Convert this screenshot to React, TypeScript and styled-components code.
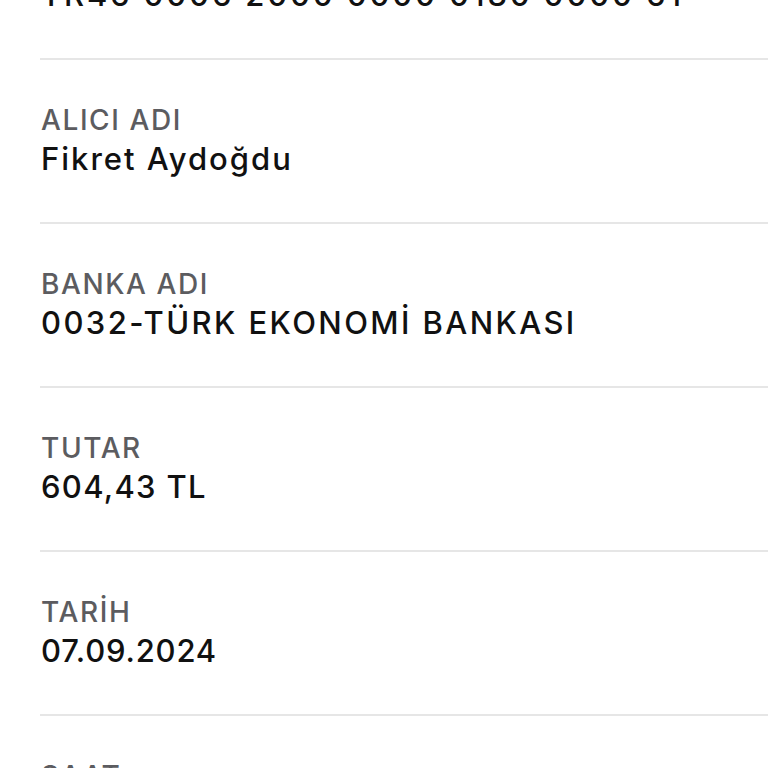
import styled, { createGlobalStyle } from 'styled-components'

const GlobalStyle = createGlobalStyle`
  html, body {
    margin: 0;
    padding: 0;
    background: #ffffff;
  }
  body {
    font-family: Inter, "Noto Sans", "Liberation Sans", sans-serif;
  }
`

const Viewport = styled.div`
  width: 768px;
  height: 768px;
  overflow: hidden;
  background: #ffffff;
`

const List = styled.div`
  display: flex;
  flex-direction: column;
  margin-top: -104px;
`

const Row = styled.div`
  display: flex;
  flex-direction: column;
  margin-left: 40px;
  padding: 41px 0 43px 1px;
  border-bottom: 2px solid #e6e6e6;
`

const Label = styled.div`
  font-size: 28px;
  line-height: 38px;
  font-weight: 500;
  color: #5c5c60;
  letter-spacing: 1.6px;
`

const Value = styled.div<{ $tracking?: number }>`
  font-size: 31px;
  line-height: 40px;
  font-weight: 500;
  color: #111111;
  letter-spacing: ${({ $tracking }) => $tracking ?? 2}px;
`

const items = [
  { label: 'IBAN', value: 'TR46 0006 2000 0000 0130 0000 61', tracking: 2.8 },
  { label: 'ALICI ADI', value: 'Fikret Aydoğdu' },
  { label: 'BANKA ADI', value: '0032-TÜRK EKONOMİ BANKASI', tracking: 2.4 },
  { label: 'TUTAR', value: '604,43 TL', tracking: 1.3 },
  { label: 'TARİH', value: '07.09.2024', tracking: 0.8 },
  { label: 'SAAT', value: '14:32' },
]

export default function App() {
  return (
    <Viewport>
      <GlobalStyle />
      <List>
        {items.map((item) => (
          <Row key={item.label}>
            <Label>{item.label}</Label>
            <Value $tracking={item.tracking}>{item.value}</Value>
          </Row>
        ))}
      </List>
    </Viewport>
  )
}
